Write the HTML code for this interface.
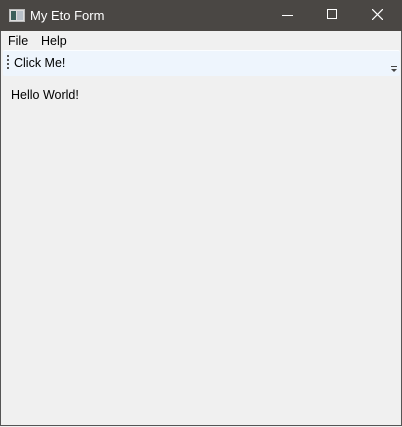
<!DOCTYPE html>
<html><head><style>
body{margin:0;width:402px;height:427px;overflow:hidden;background:#f0f0f0;font-family:"Liberation Sans",sans-serif;font-size:12.5px;color:#000;position:relative}
.win{position:absolute;left:0;top:0;width:400px;height:425px;border:1px solid #555;border-top:none}
.tb{position:absolute;left:0;top:0;width:402px;height:31px;background:#4a4744;color:#fff}
.menu{position:absolute;top:31px;left:1px;width:400px;height:18px;background:#f0f0f0}
.tool{position:absolute;top:50px;left:3px;width:397px;height:25px;background:#eef5fd;border-radius:2px;border-top:1px solid #fbfdff}
</style></head><body>
<div class="win"></div>
<div class="tb">
<svg style="position:absolute;left:9px;top:9px" width="16" height="13"><rect x="0.5" y="0.5" width="15" height="12" fill="#ddd" stroke="#bbb"/><rect x="2" y="2" width="5" height="9" fill="#3a5f5a"/><rect x="8" y="2" width="6" height="9" fill="#b8c0c8"/></svg>
<span style="position:absolute;left:30px;top:8px;font-size:13px">My Eto Form</span>
<div style="position:absolute;left:282px;top:15px;width:11px;height:1px;background:#fff"></div>
<div style="position:absolute;left:327px;top:9px;width:8px;height:8px;border:1px solid #fff"></div>
<svg style="position:absolute;left:372px;top:9px" width="11" height="11"><path d="M0 0L11 11M11 0L0 11" stroke="#fff" stroke-width="1.2"/></svg>
</div>
<div class="menu"><span style="position:absolute;left:7px;top:3px">File</span><span style="position:absolute;left:40px;top:3px">Help</span></div>
<div class="tool">
<svg style="position:absolute;left:4px;top:4px" width="2" height="15"><rect y="0" width="2" height="2" fill="#555"/><rect y="4" width="2" height="2" fill="#555"/><rect y="8" width="2" height="2" fill="#555"/><rect y="12" width="2" height="2" fill="#555"/></svg>
<span style="position:absolute;left:11px;top:5px">Click Me!</span>
<svg style="position:absolute;left:388px;top:15px" width="6" height="6"><rect width="6" height="1" fill="#444"/><path d="M0 3H6L3 6Z" fill="#444"/></svg>
</div>
<span style="position:absolute;left:11px;top:88px">Hello World!</span>
</body></html>
